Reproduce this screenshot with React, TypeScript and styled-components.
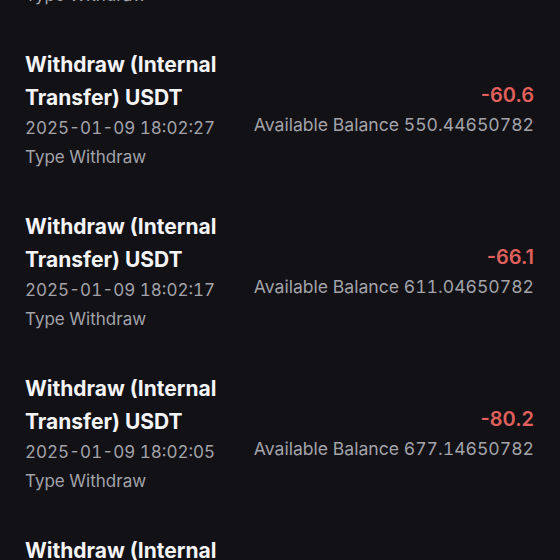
import styled, { createGlobalStyle } from 'styled-components';
import React from 'react';

const GlobalStyle = createGlobalStyle`
  html, body {
    margin: 0;
    padding: 0;
    background-color: #111116;
    overflow: hidden;
  }
`;

type Record = {
  time: string;
  amount: string;
  balance: string;
};

const records: Record[] = [
  { time: '2025-01-09 18:02:35', amount: '-55.0', balance: '494.44650782' },
  { time: '2025-01-09 18:02:27', amount: '-60.6', balance: '550.44650782' },
  { time: '2025-01-09 18:02:17', amount: '-66.1', balance: '611.04650782' },
  { time: '2025-01-09 18:02:05', amount: '-80.2', balance: '677.14650782' },
  { time: '2025-01-09 18:01:52', amount: '-90.0', balance: '757.34650782' },
];

function App() {
  return (
    <Page>
      <GlobalStyle />
      <List>
        {records.map((r, idx) => (
          <Item key={idx}>
            <Left>
              <Title>Withdraw (Internal Transfer) USDT</Title>
              <Meta>{r.time}</Meta>
              <Meta>Type Withdraw</Meta>
            </Left>
            <Right>
              <Amount>{r.amount}</Amount>
              <Balance>Available Balance {r.balance}</Balance>
            </Right>
          </Item>
        ))}
      </List>
    </Page>
  );
}

export default App;

const Page = styled.div`
  width: 560px;
  height: 560px;
  overflow: hidden;
  background-color: #111116;
  font-family: Inter, 'Noto Sans', sans-serif;
`;

const List = styled.div`
  display: flex;
  flex-direction: column;
  margin-top: -133px;
  padding: 0 26px 0 25px;
`;

const Item = styled.div`
  display: flex;
  justify-content: space-between;
  align-items: center;
  padding: 19px 0;
  height: 124px;
`;

const Left = styled.div`
  display: flex;
  flex-direction: column;
  width: 220px;
`;

const Title = styled.div`
  color: #f4f4f6;
  font-size: 21px;
  font-weight: 700;
  line-height: 33px;
`;

const Meta = styled.div`
  color: #a3a3a9;
  font-size: 17px;
  line-height: 29px;
  font-variant-numeric: tabular-nums;
`;

const Right = styled.div`
  display: flex;
  flex-direction: column;
  align-items: flex-end;
`;

const Amount = styled.div`
  color: #e0605c;
  font-size: 20px;
  font-weight: 600;
  line-height: 30px;
`;

const Balance = styled.div`
  color: #a3a3a9;
  font-size: 17.6px;
  line-height: 30px;
  font-variant-numeric: tabular-nums;
`;
